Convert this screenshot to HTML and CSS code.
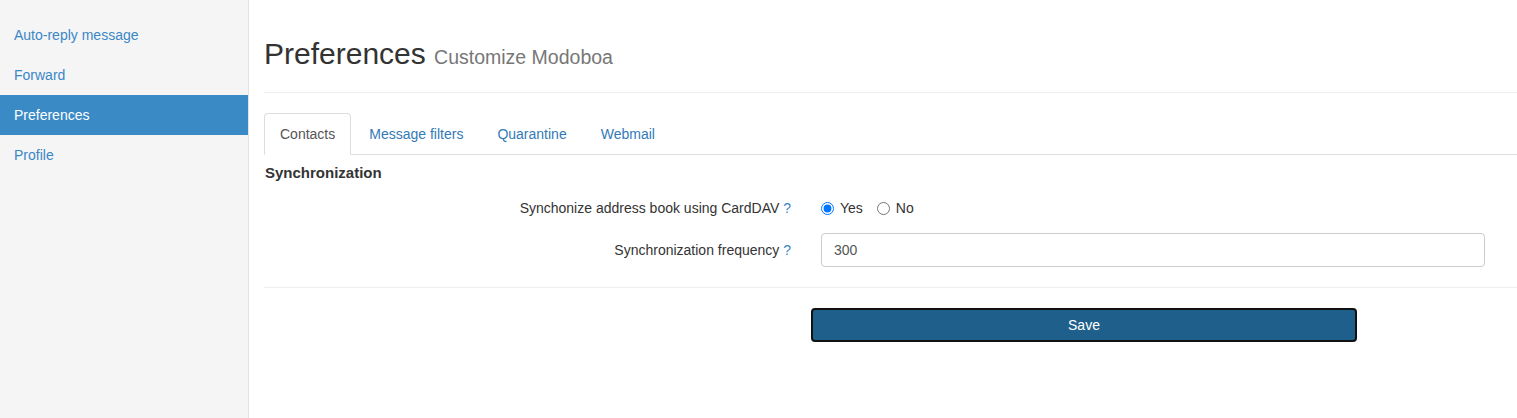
FILE: index.html
```html
<!DOCTYPE html>
<html>
<head>
<meta charset="utf-8">
<link rel="stylesheet" href="styles.css">
</head>
<body>
<div class="layout">
  <aside class="sidebar">
    <ul class="side-nav">
      <li><a href="#">Auto-reply message</a></li>
      <li><a href="#">Forward</a></li>
      <li class="active"><a href="#">Preferences</a></li>
      <li><a href="#">Profile</a></li>
    </ul>
  </aside>
  <main class="main">
    <div class="page-header">
      <h1>Preferences <small>Customize Modoboa</small></h1>
    </div>
    <ul class="tabs">
      <li class="active"><a href="#">Contacts</a></li>
      <li><a href="#">Message filters</a></li>
      <li><a href="#">Quarantine</a></li>
      <li><a href="#">Webmail</a></li>
    </ul>
    <h5 class="section-title">Synchronization</h5>
    <div class="form-row row-radio">
      <label class="form-label">Synchonize address book using CardDAV <span class="help">?</span></label>
      <div class="form-control-wrap radios">
        <label class="radio"><input type="radio" name="sync" checked> Yes</label>
        <label class="radio"><input type="radio" name="sync"> No</label>
      </div>
    </div>
    <div class="form-row">
      <label class="form-label">Synchronization frequency <span class="help">?</span></label>
      <div class="form-control-wrap">
        <input class="text-input" type="text" value="300">
      </div>
    </div>
    <hr class="divider">
    <div class="actions">
      <button class="btn-save" type="button">Save</button>
    </div>
  </main>
</div>
</body>
</html>
```

FILE: styles.css
```css
* { box-sizing: border-box; }
html, body { margin: 0; padding: 0; }
body {
  font-family: "Liberation Sans", Arial, sans-serif;
  font-size: 14px;
  line-height: 20px;
  color: #333;
  background: #fff;
}
.layout {
  display: flex;
  min-height: 418px;
}
.sidebar {
  width: 249px;
  flex: 0 0 249px;
  background: #f5f5f5;
  border-right: 1px solid #e3e3e3;
  padding-top: 15px;
}
.side-nav {
  list-style: none;
  margin: 0;
  padding: 0;
}
.side-nav a {
  display: block;
  padding: 10px 14px;
  color: #3a87c6;
  text-decoration: none;
}
.side-nav .active a {
  background: #3a8ac6;
  color: #fff;
}
.main {
  flex: 1;
  padding-left: 15px;
  min-width: 0;
}
.page-header {
  padding-top: 37px;
  padding-bottom: 18px;
  border-bottom: 1px solid #eee;
}
.page-header h1 {
  margin: 0;
  font-size: 30px;
  line-height: 33px;
  font-weight: normal;
  color: #333;
}
.page-header small {
  font-size: 19.5px;
  color: #777;
}
.tabs {
  list-style: none;
  margin: 20px 0 0;
  padding: 0;
  display: flex;
  border-bottom: 1px solid #ddd;
}
.tabs li {
  margin-right: 2px;
  margin-bottom: -1px;
}
.tabs a {
  display: block;
  padding: 10px 15px;
  border: 1px solid transparent;
  border-radius: 4px 4px 0 0;
  color: #337ab7;
  text-decoration: none;
}
.tabs .active a {
  color: #555;
  background: #fff;
  border-color: #ddd #ddd transparent;
}
.section-title {
  margin: 8px 0 8px 1px;
  font-size: 15px;
  line-height: 20px;
  font-weight: bold;
  color: #333;
}
.form-row {
  display: grid;
  grid-template-columns: 542px 1fr;
  align-items: center;
  min-height: 34px;
}
.row-radio { margin-bottom: 8px; }
.form-label {
  text-align: right;
  padding-right: 15px;
  color: #333;
}
.help { color: #3a87c6; }
.form-control-wrap {
  padding-left: 15px;
  padding-right: 32px;
}
.radios {
  display: flex;
  align-items: center;
  gap: 14px;
}
.radio {
  display: inline-flex;
  align-items: center;
  gap: 6px;
}
.radio input {
  margin: 0;
  width: 13px;
  height: 13px;
}
.text-input {
  display: block;
  width: 100%;
  height: 34px;
  padding: 6px 12px;
  font-family: "Liberation Sans", Arial, sans-serif;
  font-size: 14px;
  color: #555;
  border: 1px solid #ccc;
  border-radius: 4px;
  background: #fff;
}
.divider {
  margin: 20px 0;
  border: 0;
  border-top: 1px solid #eee;
}
.actions {
  padding-left: 547px;
}
.btn-save {
  display: block;
  width: 546px;
  height: 34px;
  background: #1f5f8b;
  color: #fff;
  border: 2px solid #111;
  border-radius: 4px;
  font-family: "Liberation Sans", Arial, sans-serif;
  font-size: 14px;
}
```
